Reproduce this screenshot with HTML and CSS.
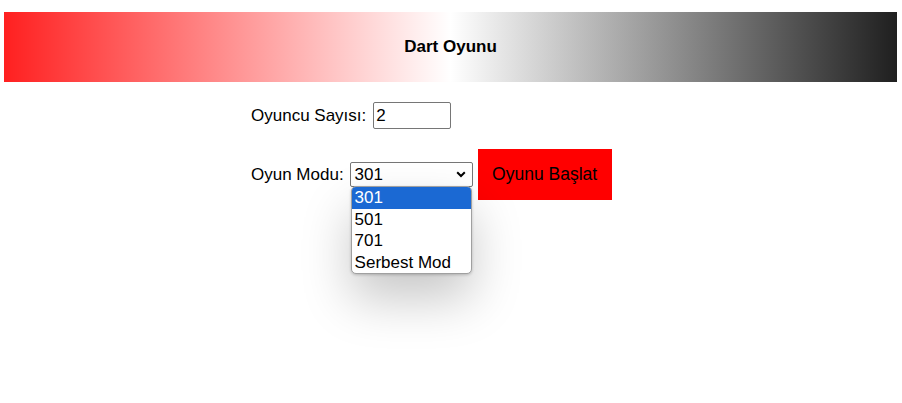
FILE: index.html
```html
<!DOCTYPE html>
<html lang="tr">
<head>
<meta charset="utf-8">
<title>Dart Oyunu</title>
<link rel="stylesheet" href="styles.css">
</head>
<body>
<header class="banner"><h1 class="banner-title">Dart Oyunu</h1></header>
<main class="setup">
  <div class="row row-players">
    <label class="label" for="players">Oyuncu Sayısı:</label>
    <input class="num-input" id="players" type="text" value="2">
  </div>
  <div class="row row-mode">
    <label class="label" for="mode">Oyun Modu:</label>
    <span class="select-wrap">
      <span class="select" id="mode">
        <span class="select-value">301</span>
        <svg class="chevron" width="10" height="7" viewBox="0 0 10 7"><path d="M1.2 1.3 L5 5 L8.8 1.3" fill="none" stroke="#000" stroke-width="2"/></svg>
      </span>
      <ul class="dropdown">
        <li class="option selected">301</li>
        <li class="option">501</li>
        <li class="option">701</li>
        <li class="option">Serbest Mod</li>
      </ul>
    </span>
    <button class="start-btn" type="button">Oyunu Başlat</button>
  </div>
</main>
</body>
</html>
```
FILE: styles.css
```css
html, body {
  margin: 0;
  padding: 0;
  background: #fff;
}
html {
  height: 100%;
}
body {
  min-height: 100%;
  font-family: "Liberation Sans", Arial, sans-serif;
  font-size: 17px;
  color: #000;
}
.banner {
  margin: 12px 5px 0 4px;
  height: 70px;
  display: flex;
  align-items: center;
  justify-content: center;
  background: linear-gradient(to right, #ff2020, #ffffff 50%, #1f1f1f);
}
.banner-title {
  margin: 0;
  font-size: 17px;
  font-weight: bold;
}
.setup {
  width: 400px;
  margin: 20px auto 0;
  padding-bottom: 200px;
}
.row {
  display: flex;
  align-items: center;
}
.row-players {
  height: 27px;
}
.row-mode {
  margin-top: 20px;
  height: 51px;
}
.num-input {
  box-sizing: border-box;
  width: 78px;
  height: 27px;
  margin-left: 7px;
  border: 1px solid #767676;
  border-radius: 2px;
  padding: 0 2px;
  font: inherit;
  color: #000;
}
.select-wrap {
  position: relative;
  display: block;
  margin-left: 6px;
}
.select {
  box-sizing: border-box;
  width: 123px;
  height: 25px;
  border: 1px solid #767676;
  border-radius: 2px;
  padding: 0 6px 0 4px;
  display: flex;
  align-items: center;
  justify-content: space-between;
  font-size: 17px;
  background: #fff;
}
.chevron {
  display: block;
}
.dropdown {
  position: absolute;
  left: 1px;
  top: 24px;
  width: 121px;
  box-sizing: border-box;
  margin: 0;
  padding: 0;
  list-style: none;
  background: #fff;
  border: 1px solid #a0a0a0;
  border-radius: 5px;
  overflow: hidden;
  box-shadow: 0 25px 50px rgba(0, 0, 0, 0.22), 0 1px 3px rgba(0, 0, 0, 0.2);
  font-size: 17px;
  z-index: 5;
}
.option {
  height: 21.5px;
  line-height: 21px;
  padding-left: 3px;
  white-space: nowrap;
}
.option.selected {
  background: #1b69d3;
  color: #fff;
}
.start-btn {
  box-sizing: border-box;
  width: 134px;
  height: 51px;
  margin-left: 5px;
  border: none;
  background: #ff0000;
  color: #000;
  font: inherit;
  font-size: 17.5px;
  padding: 0;
}
```
